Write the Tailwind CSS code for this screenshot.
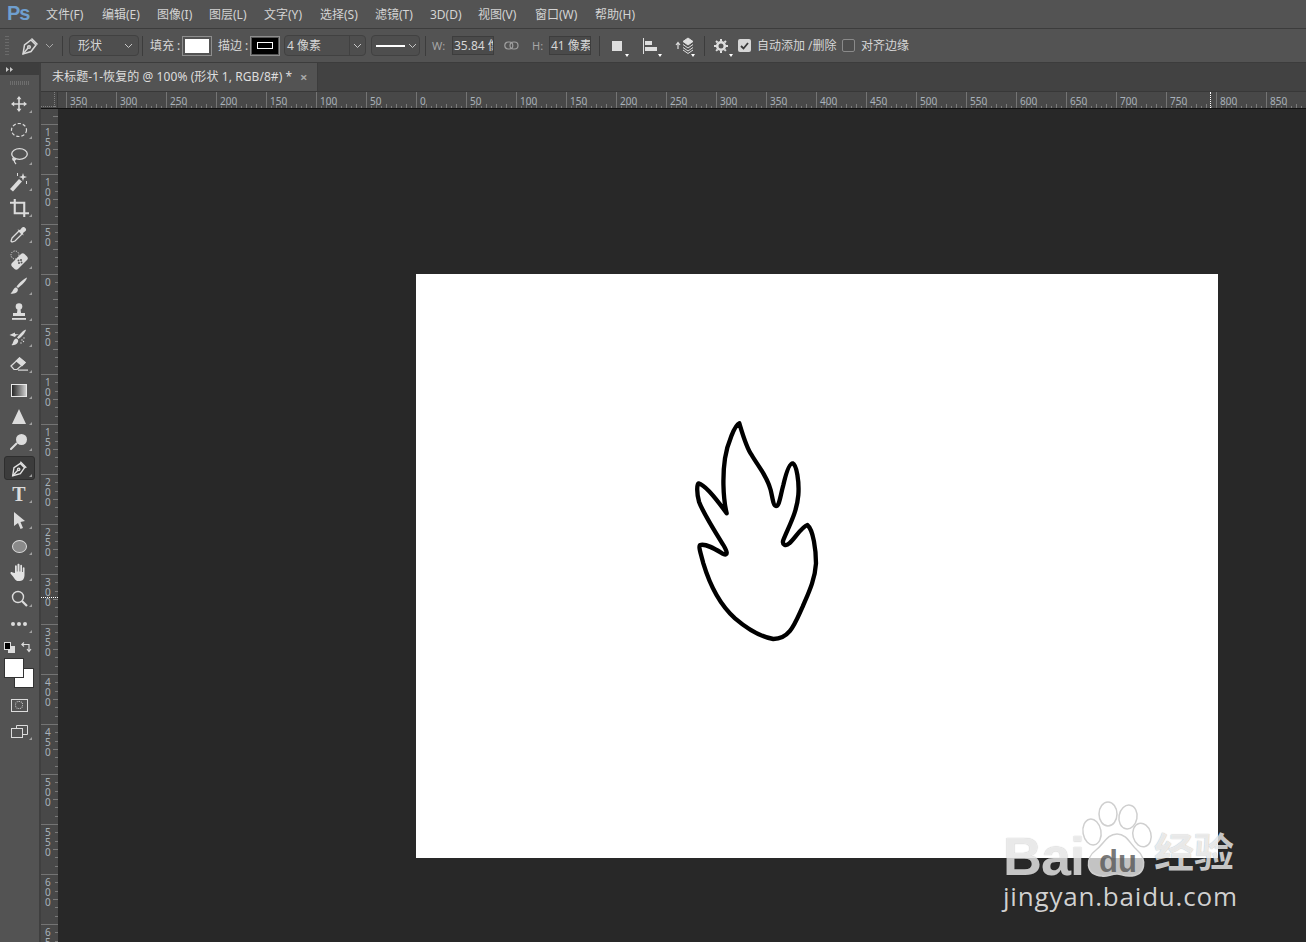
<!DOCTYPE html>
<html lang="zh-CN">
<head>
<meta charset="UTF-8">
<title>Photoshop</title>
<script src="https://cdn.jsdelivr.net/npm/@tailwindcss/browser@4"></script>
</head>
<body class="bg-[#282828]">
<div class="w-[1306px] h-[942px] overflow-hidden flex flex-col bg-[#282828] text-[#dcdcdc] font-['Noto_Sans','Noto_Sans_CJK_SC',sans-serif] text-[12px]">

  <!-- menu bar -->
  <div class="h-[29px] shrink-0 bg-[#535353] border-b border-[#3c3c3c] flex items-center">
    <span class="ml-[7px] w-[39px] -mt-[2px] font-['Liberation_Sans',sans-serif] font-bold text-[20px] tracking-[-1px] text-[#6f9fcf] leading-none">Ps</span>
    <div class="flex text-[#d4d4d4] leading-none pt-[1px]">
      <span class="w-[56px]">文件(F)</span>
      <span class="w-[55px]">编辑(E)</span>
      <span class="w-[52px]">图像(I)</span>
      <span class="w-[55px]">图层(L)</span>
      <span class="w-[56px]">文字(Y)</span>
      <span class="w-[55px]">选择(S)</span>
      <span class="w-[55px]">滤镜(T)</span>
      <span class="w-[48px]">3D(D)</span>
      <span class="w-[57px]">视图(V)</span>
      <span class="w-[60px]">窗口(W)</span>
      <span>帮助(H)</span>
    </div>
  </div>

  <!-- options bar -->
  <div class="h-[34px] shrink-0 bg-[#535353] border-b border-[#3c3c3c] flex items-center text-[#d6d6d6] leading-none">
    <div class="ml-[5px] w-[4px] h-[19px] bg-[repeating-linear-gradient(0deg,#6a6a6a_0,#6a6a6a_1px,transparent_1px,transparent_3px)]"></div>
    <svg class="ml-[11px] w-[20px] h-[20px]" viewBox="0 0 20 20" fill="none" stroke="#d8d8d8" stroke-width="1.5"><path d="M3 18 L4.5 9 L11 4 L16 9 L11 15.500 Z"/><path d="M11.500 2.500 L17.500 8.500"/><path d="M3 18 L8 12"/><circle cx="9" cy="11" r="1.300"/></svg>
    <svg class="ml-[5px] w-[9px] h-[6px]" viewBox="0 0 9 6" fill="none" stroke="#a8a8a8"><path d="M1 1 L4.500 4.500 L8 1"/></svg>
    <div class="ml-[8px] w-px h-[20px] bg-[#3c3c3c]"></div>
    <div class="ml-[6px] w-[70px] h-[21px] rounded-[4px] bg-[#4e4e4e] border border-[#414141] flex items-center justify-between pl-[8px] pr-[5px]">
      <span>形状</span>
      <svg class="w-[9px] h-[6px]" viewBox="0 0 9 6" fill="none" stroke="#c8c8c8"><path d="M1 1 L4.500 4.500 L8 1"/></svg>
    </div>
    <div class="ml-[3px] w-px h-[20px] bg-[#3c3c3c]"></div>
    <span class="ml-[7px] w-[32px]">填充 :</span>
    <div class="w-[30px] h-[20px] border border-[#8e8e8e] p-[2px]"><div class="w-full h-full bg-white"></div></div>
    <span class="ml-[6px] w-[32px]">描边 :</span>
    <div class="w-[30px] h-[20px] border border-[#8e8e8e] p-px"><div class="w-full h-full bg-black flex items-center justify-center"><div class="w-[16px] h-[7px] border border-white"></div></div></div>
    <div class="ml-[4px] w-[82px] h-[21px] rounded-[4px] bg-[#4e4e4e] border border-[#414141] flex items-center">
      <span class="pl-[2px] w-[64px]">4 像素</span>
      <div class="h-full border-l border-[#414141] flex-1 flex items-center justify-center">
        <svg class="w-[9px] h-[6px]" viewBox="0 0 9 6" fill="none" stroke="#c8c8c8"><path d="M1 1 L4.500 4.500 L8 1"/></svg>
      </div>
    </div>
    <div class="ml-[5px] w-[49px] h-[21px] rounded-[4px] bg-[#4e4e4e] border border-[#414141] flex items-center pl-[4px] gap-[3px]">
      <div class="w-[29px] h-[2px] bg-white"></div>
      <svg class="w-[9px] h-[6px]" viewBox="0 0 9 6" fill="none" stroke="#c8c8c8"><path d="M1 1 L4.500 4.500 L8 1"/></svg>
    </div>
    <div class="ml-[5px] w-px h-[20px] bg-[#3c3c3c]"></div>
    <span class="ml-[6px] w-[20px] text-[#a6a6a6] text-[11px]">W:</span>
    <div class="w-[42px] h-[19px] bg-[#4a4a4a] border border-[#3d3d3d] pl-px flex items-center overflow-hidden whitespace-nowrap">35.84 像素</div>
    <svg class="ml-[10px] w-[15px] h-[9px]" viewBox="0 0 15 9" fill="none" stroke="#a0a0a0" stroke-width="1.200"><rect x="0.800" y="1" width="8" height="7" rx="3.500"/><rect x="6" y="1" width="8" height="7" rx="3.500"/></svg>
    <span class="ml-[13px] w-[17px] text-[#a6a6a6] text-[11px]">H:</span>
    <div class="w-[42px] h-[19px] bg-[#4a4a4a] border border-[#3d3d3d] pl-px flex items-center overflow-hidden whitespace-nowrap">41 像素</div>
    <div class="ml-[8px] w-px h-[20px] bg-[#3c3c3c]"></div>
    <div class="ml-[12px] w-[10px] h-[10px] bg-[#dedede]"></div>
    <div class="self-end mb-[5px] ml-[3px] w-0 h-0 border-x-[2px] border-x-transparent border-t-[3px] border-t-white"></div>
    <svg class="ml-[14px] w-[14px] h-[16px]" viewBox="0 0 14 16" fill="#dedede"><rect x="0" y="0" width="1" height="16"/><rect x="2" y="3" width="7" height="4"/><rect x="2" y="9" width="12" height="4"/></svg>
    <div class="self-end mb-[5px] ml-[1px] w-0 h-0 border-x-[2px] border-x-transparent border-t-[3px] border-t-white"></div>
    <svg class="ml-[13px] w-[20px] h-[18px]" viewBox="0 0 20 18" fill="none" stroke="#dedede"><path d="M3 12 V6 M1 8 L3 5.500 L5 8" stroke-width="1.200"/><path d="M13 1 L18 4.500 L13 8 L8 4.500 Z" fill="#dedede"/><path d="M8 7.500 L13 11 L18 7.500"/><path d="M8 10.500 L13 14 L18 10.500"/><path d="M8 13 L13 16.500 L18 13"/></svg>
    <div class="self-end mb-[5px] -ml-[4px] w-0 h-0 border-x-[2px] border-x-transparent border-t-[3px] border-t-white"></div>
    <div class="ml-[9px] w-px h-[20px] bg-[#3c3c3c]"></div>
    <svg class="ml-[9px] w-[14px] h-[14px]" viewBox="0 0 14 14"><circle cx="7" cy="7" r="3.800" fill="none" stroke="#dedede" stroke-width="2.600"/><path d="M7 0 V14 M0 7 H14 M2 2 L12 12 M12 2 L2 12" stroke="#dedede" stroke-width="2" stroke-dasharray="2.200 9.600 2.200"/></svg>
    <div class="self-end mb-[5px] ml-[1px] w-0 h-0 border-x-[2px] border-x-transparent border-t-[3px] border-t-white"></div>
    <div class="ml-[5px] w-[13px] h-[13px] rounded-[2px] bg-[#d6d6d6] flex items-center justify-center">
      <svg class="w-[9px] h-[8px]" viewBox="0 0 9 8" fill="none" stroke="#3a3a3a" stroke-width="1.800"><path d="M1 4 L3.500 6.500 L8 1"/></svg>
    </div>
    <span class="ml-[6px] w-[85px]">自动添加 /删除</span>
    <div class="w-[13px] h-[13px] rounded-[2px] border border-[#8a8a8a] bg-[#4e4e4e]"></div>
    <span class="ml-[6px]">对齐边缘</span>
  </div>

  <div class="flex-1 flex min-h-0">
    <!-- toolbar -->
    <div class="w-[41px] shrink-0 bg-[#535353] border-r-2 border-[#3f3f3f] flex flex-col">
      <div class="h-[12px] bg-[#3e3e3e] flex items-center pl-[6px]">
        <svg class="w-[7px] h-[5px]" viewBox="0 0 7 5" fill="#c8c8c8"><path d="M0 0 L3 2.500 L0 5 Z M4 0 L7 2.500 L4 5 Z"/></svg>
      </div>
      <div class="h-[16px] flex items-center justify-center"><div class="w-[19px] h-[4px] bg-[repeating-linear-gradient(90deg,#6e6e6e_0,#6e6e6e_1px,transparent_1px,transparent_2px)]"></div></div>
      <div id="tools" class="flex flex-col">
        <div class="h-[26px] pr-[1px] flex items-center justify-center relative"><svg class="w-[16px] h-[16px]" viewBox="0 0 20 20" fill="#dcdcdc"><path d="M10 0 L13 4 H11 V9 H16 V7 L20 10 L16 13 V11 H11 V16 H13 L10 20 L7 16 H9 V11 H4 V13 L0 10 L4 7 V9 H9 V4 H7 Z"/></svg></div>
        <div class="h-[26px] pr-[1px] flex items-center justify-center relative"><svg class="w-[18px] h-[16px]" viewBox="0 0 18 16" fill="none" stroke="#dcdcdc" stroke-width="1.200" stroke-dasharray="3.200 2"><ellipse cx="9" cy="8" rx="7.500" ry="6.500"/></svg></div>
        <div class="h-[26px] pr-[1px] flex items-center justify-center relative"><svg class="w-[18px] h-[18px]" viewBox="0 0 18 18" fill="none" stroke="#dcdcdc" stroke-width="1.300"><ellipse cx="9.500" cy="7" rx="7.800" ry="5.300"/><path d="M3.500 10.500 C2 12 3 14 5 13 C6 12.500 5 11 4 12 C4 14 5 16 6 17"/></svg></div>
        <div class="h-[26px] pr-[1px] flex items-center justify-center relative"><svg class="w-[20px] h-[20px]" viewBox="0 0 20 20" fill="#dcdcdc"><path d="M1 17 L10 7 L13 9.500 L4 19.500 Z"/><path d="M14 1 L15 4 L18 5 L15 6 L14 9 L13 6 L10 5 L13 4 Z"/><rect x="8" y="1" width="1" height="3"/><rect x="17" y="9" width="1" height="3"/></svg></div>
        <div class="h-[26px] pr-[1px] flex items-center justify-center relative"><svg class="w-[19px] h-[19px]" viewBox="0 0 20 20" fill="none" stroke="#dcdcdc" stroke-width="2.200"><path d="M0 4 H15 V19"/><path d="M5 0 V15 H20"/></svg></div>
        <div class="h-[26px] pr-[1px] flex items-center justify-center relative"><svg class="w-[18px] h-[18px]" viewBox="0 0 18 18"><path d="M2 13 L9 6 L12 9 L5 16 L2 17 L1 16 Z" fill="none" stroke="#dcdcdc" stroke-width="1.300"/><path d="M7.500 4.500 L10 5 L12 2.500 C14 0.500 17.500 4 15.500 6 L13 8 L13.500 10.500 Z" fill="#dcdcdc"/></svg></div>
        <div class="h-[26px] pr-[1px] flex items-center justify-center relative"><svg class="w-[20px] h-[20px]" viewBox="0 0 20 20"><path d="M3 13 L12 4 C13 3 14.500 3 15.500 4 L18 6.500 C19 7.500 19 9 18 10 L9 19 C8 20 6.500 20 5.500 19 L3 16.500 C2 15.500 2 14 3 13 Z" fill="#dcdcdc"/><g fill="#535353"><circle cx="9.500" cy="10.500" r="1"/><circle cx="12" cy="10" r="1"/><circle cx="10" cy="13" r="1"/><circle cx="12.500" cy="12.500" r="1"/></g><circle cx="6" cy="5" r="4" fill="none" stroke="#dcdcdc" stroke-dasharray="1.200 1.200"/></svg></div>
        <div class="h-[26px] pr-[1px] flex items-center justify-center relative"><svg class="w-[18px] h-[18px]" viewBox="0 0 18 18" fill="#dcdcdc"><path d="M17 0.500 C17 3 11 9 8 11 L6.500 9.500 C9 6 14.500 1 17 0.500 Z"/><path d="M5.500 10.500 C8 10.500 8.500 13 7 15 C5.500 16.500 3 17 0.500 16.500 C3 15 3 11.500 5.500 10.500 Z"/></svg></div>
        <div class="h-[26px] pr-[1px] flex items-center justify-center relative"><svg class="w-[18px] h-[18px]" viewBox="0 0 18 18" fill="#dcdcdc"><ellipse cx="9" cy="3.500" rx="3.300" ry="3.300"/><path d="M7.500 6 H10.500 L11 10 H15 V13 H3 V10 H7 Z"/><rect x="2" y="15" width="14" height="1.800"/></svg></div>
        <div class="h-[26px] pr-[1px] flex items-center justify-center relative"><svg class="w-[20px] h-[18px]" viewBox="0 0 20 18" fill="#dcdcdc"><path d="M17 0.500 C17 3 12 8.500 9.500 10 L8 8.500 C10 6 14.500 1 17 0.500 Z"/><path d="M7 9.500 C9.500 10 10 12.500 8 14.500 C6.500 16 4 16.500 2.500 16 C4.500 14.500 4 10.500 7 9.500 Z"/><path d="M0.500 6 L6 3.500 L6 5 L10 5.500 L7 6.500 L6 8 Z"/><circle cx="13" cy="11" r="0.700"/><circle cx="15" cy="9" r="0.700"/><circle cx="12" cy="14" r="0.700"/><circle cx="14.500" cy="12.500" r="0.700"/></svg></div>
        <div class="h-[26px] pr-[1px] flex items-center justify-center relative"><svg class="w-[19px] h-[16px]" viewBox="0 0 19 16"><path d="M1 10 L9.500 2 L15 6.500 L7 13.500 H4 Z" fill="none" stroke="#dcdcdc" stroke-width="1.200"/><path d="M9.500 1 L16 6.500 L12 10.500 L5.500 5 Z" fill="#dcdcdc"/><rect x="8" y="13.500" width="10" height="1.200" fill="#dcdcdc"/></svg></div>
        <div class="h-[26px] pr-[1px] flex items-center justify-center relative"><div class="w-[16px] h-[13px] border border-[#e8e8e8] bg-linear-to-r from-[#2a2a2a] to-[#d0d0d0]"></div></div>
        <div class="h-[26px] pr-[1px] flex items-center justify-center relative"><svg class="w-[14px] h-[15px]" viewBox="0 0 14 15" fill="#dcdcdc"><path d="M7 0 L14 15 H0 Z"/></svg></div>
        <div class="h-[26px] pr-[1px] flex items-center justify-center relative"><svg class="w-[18px] h-[18px]" viewBox="0 0 18 18" fill="#dcdcdc"><circle cx="11.500" cy="6.500" r="5.500"/><path d="M6.500 10.500 L1 16" stroke="#dcdcdc" stroke-width="2" stroke-linecap="round"/></svg></div>
        <div class="h-[26px] pr-[1px] flex items-center justify-center relative"><div class="absolute inset-x-[4px] inset-y-[1px] bg-[#3c3c3c] border border-[#2e2e2e] rounded-[3px]"></div><svg class="relative w-[17px] h-[17px]" viewBox="0 0 20 20" fill="none" stroke="#e4e4e4" stroke-width="1.600"><path d="M2 18.500 L3.500 9 L11 4 L16 9 L11 16 Z"/><path d="M11 2 L18 9"/><path d="M2 18.500 L8 12"/><circle cx="9" cy="11" r="1.400"/></svg></div>
        <div class="h-[26px] pr-[1px] flex items-center justify-center relative font-['Liberation_Serif',serif] font-bold text-[20px] text-[#dcdcdc] leading-none">T</div>
        <div class="h-[26px] pr-[1px] flex items-center justify-center relative"><svg class="w-[13px] h-[17px]" viewBox="0 0 13 17" fill="#dcdcdc"><path d="M1 0 L12 9 L7.500 10 L10 16 L7.500 17 L5 11 L1 14 Z"/></svg></div>
        <div class="h-[26px] pr-[1px] flex items-center justify-center relative"><div class="w-[15px] h-[13px] rounded-[50%] bg-[#8a8a8a] border border-[#dcdcdc]"></div></div>
        <div class="h-[26px] pr-[1px] flex items-center justify-center relative"><svg class="w-[18px] h-[19px]" viewBox="0 0 18 19" fill="#e2e2e2"><path d="M5 10 V3 C5 2 6.800 2 6.800 3 V8.500 H7.500 V1.500 C7.500 0.500 9.500 0.500 9.500 1.500 V8.500 H10.300 V2.500 C10.300 1.500 12 1.500 12 2.500 V9 H12.800 V5 C12.800 4 14.500 4 14.500 5 V12 C14.500 15 13 18 10 18 H8 C5.500 18 4.500 15.500 3 13.500 L0.500 10.500 C0 9.500 1.500 8.500 2.500 9.500 Z"/></svg></div>
        <div class="h-[26px] pr-[1px] flex items-center justify-center relative"><svg class="w-[17px] h-[17px]" viewBox="0 0 17 17" fill="none" stroke="#dcdcdc"><circle cx="7" cy="7" r="5.500" stroke-width="1.400"/><path d="M11 11 L16 16" stroke-width="2.200"/></svg></div>
        <div class="h-[26px] pr-[1px] flex items-center justify-center relative"><div class="flex gap-[2px]"><div class="w-[4px] h-[4px] rounded-full bg-[#dcdcdc]"></div><div class="w-[4px] h-[4px] rounded-full bg-[#dcdcdc]"></div><div class="w-[4px] h-[4px] rounded-full bg-[#dcdcdc]"></div></div></div>
      </div>
      <!-- colours -->
      <div class="h-[55px] pl-[4px] pt-[5px] flex flex-col">
        <div class="flex h-[12px] justify-between pr-[7px]">
          <div class="w-[10px] h-[11px] relative"><div class="absolute left-[4px] top-[4px] w-[7px] h-[7px] bg-[#dcdcdc]"></div><div class="absolute left-0 top-0 w-[7px] h-[8px] bg-black border border-[#dcdcdc]"></div></div>
          <svg class="w-[11px] h-[11px]" viewBox="0 0 11 11" fill="none" stroke="#dcdcdc" stroke-width="1.200"><path d="M3 0.500 L0.800 2.500 L3 4.500 M1 2.500 H8 V9 M6 7 L8 9.500 L10 7"/></svg>
        </div>
        <div class="relative mt-[4px]">
          <div class="absolute left-[10px] top-[10px] w-[20px] h-[20px] bg-white border border-[#333]"></div>
          <div class="absolute left-0 top-0 w-[20px] h-[20px] bg-white border border-[#333]"></div>
        </div>
      </div>
      <div class="h-[26px] pr-[1px] flex items-center justify-center"><div class="w-[17px] h-[13px] border border-[#dcdcdc] flex items-center justify-center"><div class="w-[8px] h-[8px] rounded-full border border-dotted border-[#dcdcdc]"></div></div></div>
      <div class="h-[26px] pr-[1px] flex items-center justify-center relative"><svg class="w-[17px] h-[13px]" viewBox="0 0 17 13" fill="none" stroke="#dcdcdc"><path d="M5.500 3.500 V0.500 H16.500 V9.500 H11.500"/><rect x="0.500" y="3.500" width="11" height="9"/></svg><span class="absolute right-[7px] bottom-[4px] w-0 h-0 border-l-[3px] border-l-transparent border-b-[3px] border-b-[#a0a0a0]"></span></div>
    </div>

    <div class="flex-1 flex flex-col min-w-0">
      <!-- tabs -->
      <div class="h-[29px] shrink-0 bg-[#424242] border-b border-[#383838]">
        <div class="w-[277px] h-[28px] bg-[#535353] border-r border-[#3c3c3c] flex items-center pl-[11px] text-[#dedede] whitespace-nowrap leading-none">
          <span class="w-[248px] tracking-[0.08px]">未标题-1-恢复的 @ 100% (形状 1, RGB/8#) *</span>
          <span class="text-[#a8a8a8] text-[13px] font-bold">×</span>
        </div>
      </div>
      <!-- horizontal ruler -->
      <div class="h-[17px] shrink-0 bg-[#484848] flex overflow-hidden border-b border-[#111]">
        <div class="w-[17px] shrink-0 border-r border-[#3a3a3a] relative"><div class="absolute left-0 right-[1px] bottom-[1px] border-t border-dotted border-[#808080]"></div><div class="absolute top-0 bottom-[1px] right-[2px] border-l border-dotted border-[#808080]"></div></div>
        <div class="w-[8px] shrink-0"></div>
        <div id="hruler" class="flex relative"></div>
      </div>
      <div class="flex-1 flex min-h-0">
        <!-- vertical ruler -->
        <div class="w-[17px] shrink-0 bg-[#484848] overflow-hidden flex flex-col">
          <div class="h-[15px] shrink-0 relative"><div class="absolute right-0 top-[7px] w-[5px] border-t border-[#7a7a7a]"></div></div>
          <div id="vruler" class="flex flex-col relative"></div>
        </div>
        <!-- canvas area -->
        <div class="flex-1 bg-[#282828] pl-[358px] pt-[165px] relative overflow-hidden">
          <div class="w-[802px] h-[584px] bg-white relative">
            <svg class="absolute left-[264px] top-[136px] w-[150px] h-[240px]" viewBox="0 0 450 720" fill="none" stroke="#000" stroke-width="13" stroke-linejoin="round">
              <path d="M178 40 C190 80 200 115 215 135 C235 170 260 195 272 240 C278 265 280 288 288 288 C298 288 300 262 310 225 C318 190 328 160 338 160 C350 165 358 215 355 255 C350 310 328 345 310 390 C305 405 318 410 328 400 C345 385 365 350 382 345 C400 360 408 420 408 460 C405 510 385 550 368 590 C345 640 330 687 280 687 C240 680 200 655 165 625 C115 580 85 510 70 460 C62 430 55 410 60 405 C80 400 110 420 130 432 C145 438 142 425 130 405 C105 365 70 310 57 275 C50 250 50 222 56 220 C75 225 115 275 140 310 C128 260 128 190 135 145 C142 100 165 45 178 40 Z"/>
            </svg>
          </div>
          <!-- watermark -->
          <div class="absolute left-[945px] top-[691px] w-[240px] h-[115px] text-white/75 [text-shadow:0_0_1px_rgba(0,0,0,0.35)]">
            <svg class="absolute left-[72px] top-0 w-[85px] h-[82px]" viewBox="0 0 85 82" fill="rgba(255,255,255,0.3)" stroke="#cfcfcf" stroke-width="1.500">
              <ellipse cx="17" cy="32" rx="9" ry="13" transform="rotate(-10 17 32)"/>
              <ellipse cx="33" cy="14" rx="9" ry="12"/>
              <ellipse cx="53" cy="17" rx="9" ry="12" transform="rotate(10 53 17)"/>
              <ellipse cx="67" cy="35" rx="9" ry="12" transform="rotate(-15 67 35)"/>
              <path d="M42 34 C52 34 55 44 62 50 C72 58 72 76 54 76 C48 76 46 74 42 74 C36 74 32 77 27 76 C10 75 10 58 21 50 C29 44 32 34 42 34 Z" fill="rgba(255,255,255,0.72)"/>
            </svg>
            <span class="absolute left-0 top-[28px] font-['Liberation_Sans',sans-serif] font-bold text-[54px] leading-[56px] tracking-[-1px]">Bai</span>
            <span class="absolute left-[96px] top-[44px] font-['Liberation_Sans',sans-serif] font-bold text-[31px] leading-[36px] text-[#555]/80 [text-shadow:none]">du</span>
            <span class="absolute left-[151px] top-[28px] font-['Noto_Sans_CJK_SC',sans-serif] font-bold text-[40px] leading-[44px] whitespace-nowrap">经验</span>
            <span class="absolute left-0 top-[79px] font-['Open_Sans',sans-serif] text-[26px] leading-[34px] whitespace-nowrap tracking-[0.8px] text-[#d0d0d0]">jingyan.baidu.com</span>
          </div>
        </div>
      </div>
    </div>
  </div>
</div>

<script>
// tool corner marks, rulers
document.querySelectorAll('#tools > div').forEach(el => {
  const mark = document.createElement('span');
  mark.className = 'absolute right-[7px] bottom-[4px] w-0 h-0 border-l-[3px] border-l-transparent border-b-[3px] border-b-[#a0a0a0]';
  el.appendChild(mark);
});

const hruler = document.getElementById('hruler');
for (let v = -350; v <= 850; v += 50) {
  const cell = document.createElement('div');
  cell.className = 'w-[50px] h-[16px] shrink-0 border-l border-[#747474] relative pl-[3px] pt-[3px] text-[10px] leading-[13px] text-[#a9b2ba]';
  let ticks = '';
  for (let t = 1; t < 10; t++) {
    const x = t * 5 - 1;
    ticks += '<rect x="' + x + '" y="' + (t % 2 ? 2 : 0) + '" width="1" height="' + (t % 2 ? 2 : 4) + '" fill="#7a7a7a"/>';
  }
  cell.innerHTML = '<svg class="absolute left-0 bottom-0 w-[50px] h-[4px]">' + ticks + '</svg><span class="relative">' + Math.abs(v) + '</span>';
  hruler.appendChild(cell);
}
const guide = document.createElement('div');
guide.className = 'absolute left-[1144px] top-0 bottom-0 border-l border-dotted border-white';
hruler.appendChild(guide);

const vruler = document.getElementById('vruler');
for (let v = -150; v <= 650; v += 50) {
  const cell = document.createElement('div');
  cell.className = 'h-[50px] w-[17px] shrink-0 border-t border-[#747474] relative pl-[4px] pt-[2px] text-[10px] leading-[10px] text-[#a9b2ba]';
  let ticks = '';
  for (let t = 1; t < 6; t++) {
    const y = Math.round(t * 50 / 6) - 1;
    ticks += '<rect x="' + (t === 3 ? 0 : 2) + '" y="' + y + '" width="' + (t === 3 ? 5 : 3) + '" height="1" fill="#7a7a7a"/>';
  }
  const digits = String(Math.abs(v)).split('').map(d => '<div>' + d + '</div>').join('');
  cell.innerHTML = '<svg class="absolute right-0 top-0 w-[5px] h-[50px]">' + ticks + '</svg>' + digits;
  vruler.appendChild(cell);
}
const vguide = document.createElement('div');
vguide.className = 'absolute left-0 right-0 top-[473px] border-t border-dotted border-white';
vruler.appendChild(vguide);
</script>
</body>
</html>
